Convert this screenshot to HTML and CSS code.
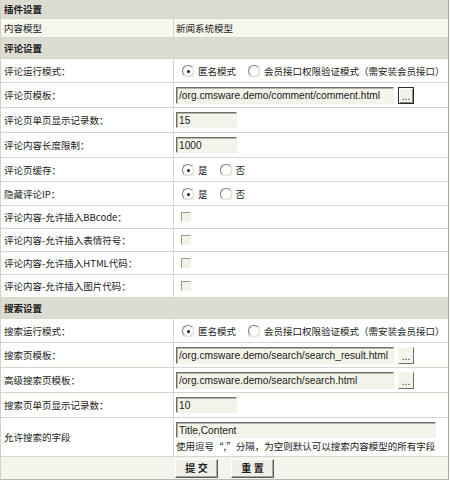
FILE: index.html
```html
<!DOCTYPE html>
<html lang="zh-CN">
<head>
<meta charset="utf-8">
<title>插件设置</title>
<link rel="stylesheet" href="styles.css">
</head>
<body>
<div class="panel">
  <div class="row head">插件设置</div>
  <div class="row plain">
    <div class="label">内容模型</div>
    <div class="value">新闻系统模型</div>
  </div>

  <div class="row head tall">评论设置</div>
  <div class="row r-radio">
    <div class="label">评论运行模式：</div>
    <div class="value">
      <span class="opt"><span class="radio on"></span>匿名模式</span>
      <span class="opt"><span class="radio"></span>会员接口权限验证模式（需安装会员接口）</span>
    </div>
  </div>
  <div class="row r-input">
    <div class="label">评论页模板：</div>
    <div class="value">
      <span class="field long">/org.cmsware.demo/comment/comment.html</span>
      <span class="pick focus">...</span>
    </div>
  </div>
  <div class="row r-input">
    <div class="label">评论页单页显示记录数：</div>
    <div class="value"><span class="field short">15</span></div>
  </div>
  <div class="row r-input">
    <div class="label">评论内容长度限制：</div>
    <div class="value"><span class="field short">1000</span></div>
  </div>
  <div class="row r-radio">
    <div class="label">评论页缓存：</div>
    <div class="value">
      <span class="opt"><span class="radio on"></span>是</span>
      <span class="opt"><span class="radio"></span>否</span>
    </div>
  </div>
  <div class="row r-radio">
    <div class="label">隐藏评论IP：</div>
    <div class="value">
      <span class="opt"><span class="radio on"></span>是</span>
      <span class="opt"><span class="radio"></span>否</span>
    </div>
  </div>
  <div class="row r-check">
    <div class="label">评论内容-允许插入BBcode：</div>
    <div class="value"><span class="check"></span></div>
  </div>
  <div class="row r-check">
    <div class="label">评论内容-允许插入表情符号：</div>
    <div class="value"><span class="check"></span></div>
  </div>
  <div class="row r-check">
    <div class="label">评论内容-允许插入HTML代码：</div>
    <div class="value"><span class="check"></span></div>
  </div>
  <div class="row r-check">
    <div class="label">评论内容-允许插入图片代码：</div>
    <div class="value"><span class="check"></span></div>
  </div>

  <div class="row head tall">搜索设置</div>
  <div class="row r-radio">
    <div class="label">搜索运行模式：</div>
    <div class="value">
      <span class="opt"><span class="radio on"></span>匿名模式</span>
      <span class="opt"><span class="radio"></span>会员接口权限验证模式（需安装会员接口）</span>
    </div>
  </div>
  <div class="row r-input">
    <div class="label">搜索页模板：</div>
    <div class="value">
      <span class="field long">/org.cmsware.demo/search/search_result.html</span>
      <span class="pick">...</span>
    </div>
  </div>
  <div class="row r-input">
    <div class="label">高级搜索页模板：</div>
    <div class="value">
      <span class="field long">/org.cmsware.demo/search/search.html</span>
      <span class="pick">...</span>
    </div>
  </div>
  <div class="row r-input">
    <div class="label">搜索页单页显示记录数：</div>
    <div class="value"><span class="field short">10</span></div>
  </div>
  <div class="row r-area">
    <div class="label">允许搜索的字段</div>
    <div class="value stack">
      <span class="field area">Title,Content</span>
      <span class="note">使用逗号“,”分隔，为空则默认可以搜索内容模型的所有字段</span>
    </div>
  </div>
  <div class="row actions">
    <span class="btn">提 交</span>
    <span class="btn">重 置</span>
  </div>
</div>
</body>
</html>
```

FILE: styles.css
```css
* { box-sizing: border-box; }

body {
  margin: 0;
  background: #ffffff;
  font-family: "Noto Sans CJK SC", "Liberation Sans", sans-serif;
  font-size: 9.5px;
  line-height: 12px;
  color: #1a1a1a;
}

.panel {
  width: 449px;
  border-left: 1px solid #d2d2ca;
  border-right: 1px solid #a9a9a1;
  border-bottom: 1px solid #b8b8b0;
}

.row {
  display: flex;
  border-bottom: 1px solid #d6d6cd;
  background: #ffffff;
}

.head {
  height: 19px;
  align-items: center;
  padding-left: 3px;
  background: #dcdcd3;
  font-weight: bold;
}
.head.tall { height: 21px; }

.plain { height: 19px; background: #f7f7ef; }
.r-radio { height: 24px; }
.r-input { height: 25px; }
.r-check { height: 23px; }
.r-area { height: 39px; }

.label {
  width: 173px;
  flex: none;
  display: flex;
  align-items: center;
  padding-left: 3px;
  border-right: 1px solid #d6d6cd;
  white-space: nowrap;
}

.value {
  flex: 1;
  min-width: 0;
  display: flex;
  align-items: center;
  padding-left: 2px;
  white-space: nowrap;
}
.value.stack {
  flex-direction: column;
  align-items: flex-start;
  justify-content: center;
  gap: 2px;
}

.opt {
  flex: none;
  display: inline-flex;
  align-items: center;
  margin-right: 6px;
  white-space: nowrap;
}

.radio {
  flex: none;
  width: 12px;
  height: 12px;
  margin: 0 4px 0 6px;
  background: #efefe6;
  display: inline-flex;
  align-items: center;
  justify-content: center;
  position: relative;
}
.radio::before {
  content: "";
  width: 10px;
  height: 10px;
  border-radius: 50%;
  border: 1px solid;
  border-color: #7e7e78 #dcdcd4 #dcdcd4 #7e7e78;
  background: #ffffff;
}
.radio.on::after {
  content: "";
  position: absolute;
  left: 5px;
  top: 5px;
  width: 3px;
  height: 3px;
  border-radius: 50%;
  background: #1a1a1a;
}

.check {
  width: 10px;
  height: 10px;
  margin-left: 5px;
  background: #f2f2e9;
  border: 1px solid;
  border-color: #9c9c94 #f4f4ee #f4f4ee #9c9c94;
}

.field {
  display: inline-flex;
  align-items: center;
  height: 17px;
  padding: 1px 2px 0;
  background: #f4f4eb;
  border: 1px solid;
  border-color: #6f6f68 #f0f0e8 #f0f0e8 #6f6f68;
  box-shadow: inset 1px 1px 0 #b4b4ac;
  font-family: "Liberation Sans", sans-serif;
  font-size: 10.2px;
  color: #1a1a1a;
  white-space: nowrap;
  overflow: hidden;
}
.field.long { width: 218px; }
.field.short { width: 61px; height: 16px; }
.field.area { width: 260px; height: 16px; }

.note { white-space: nowrap; }

.pick {
  display: inline-flex;
  align-items: flex-end;
  justify-content: center;
  width: 16px;
  height: 17px;
  margin-left: 4px;
  padding-bottom: 2px;
  background: #f3f3ec;
  border: 1px solid;
  border-color: #f8f8f4 #6e6e68 #6e6e68 #f8f8f4;
  font-family: "Liberation Sans", sans-serif;
  font-size: 10px;
  line-height: 8px;
  color: #1a1a1a;
}
.pick.focus {
  border: 1px solid #2a2a2a;
  box-shadow: inset 1px 1px 0 #ffffff, inset -1px -1px 0 #8a8a84;
}

.actions {
  height: 22px;
  align-items: center;
  justify-content: center;
  gap: 13px;
  background: #f5f5ee;
  border-bottom: none;
}

.btn {
  width: 43px;
  height: 19px;
  display: inline-flex;
  align-items: center;
  justify-content: center;
  background: #f0f0e8;
  border: 1px solid;
  border-color: #ffffff #5e5e58 #5e5e58 #ffffff;
  box-shadow: inset -1px -1px 0 #a8a8a0;
  font-weight: bold;
  font-size: 10px;
}
```
